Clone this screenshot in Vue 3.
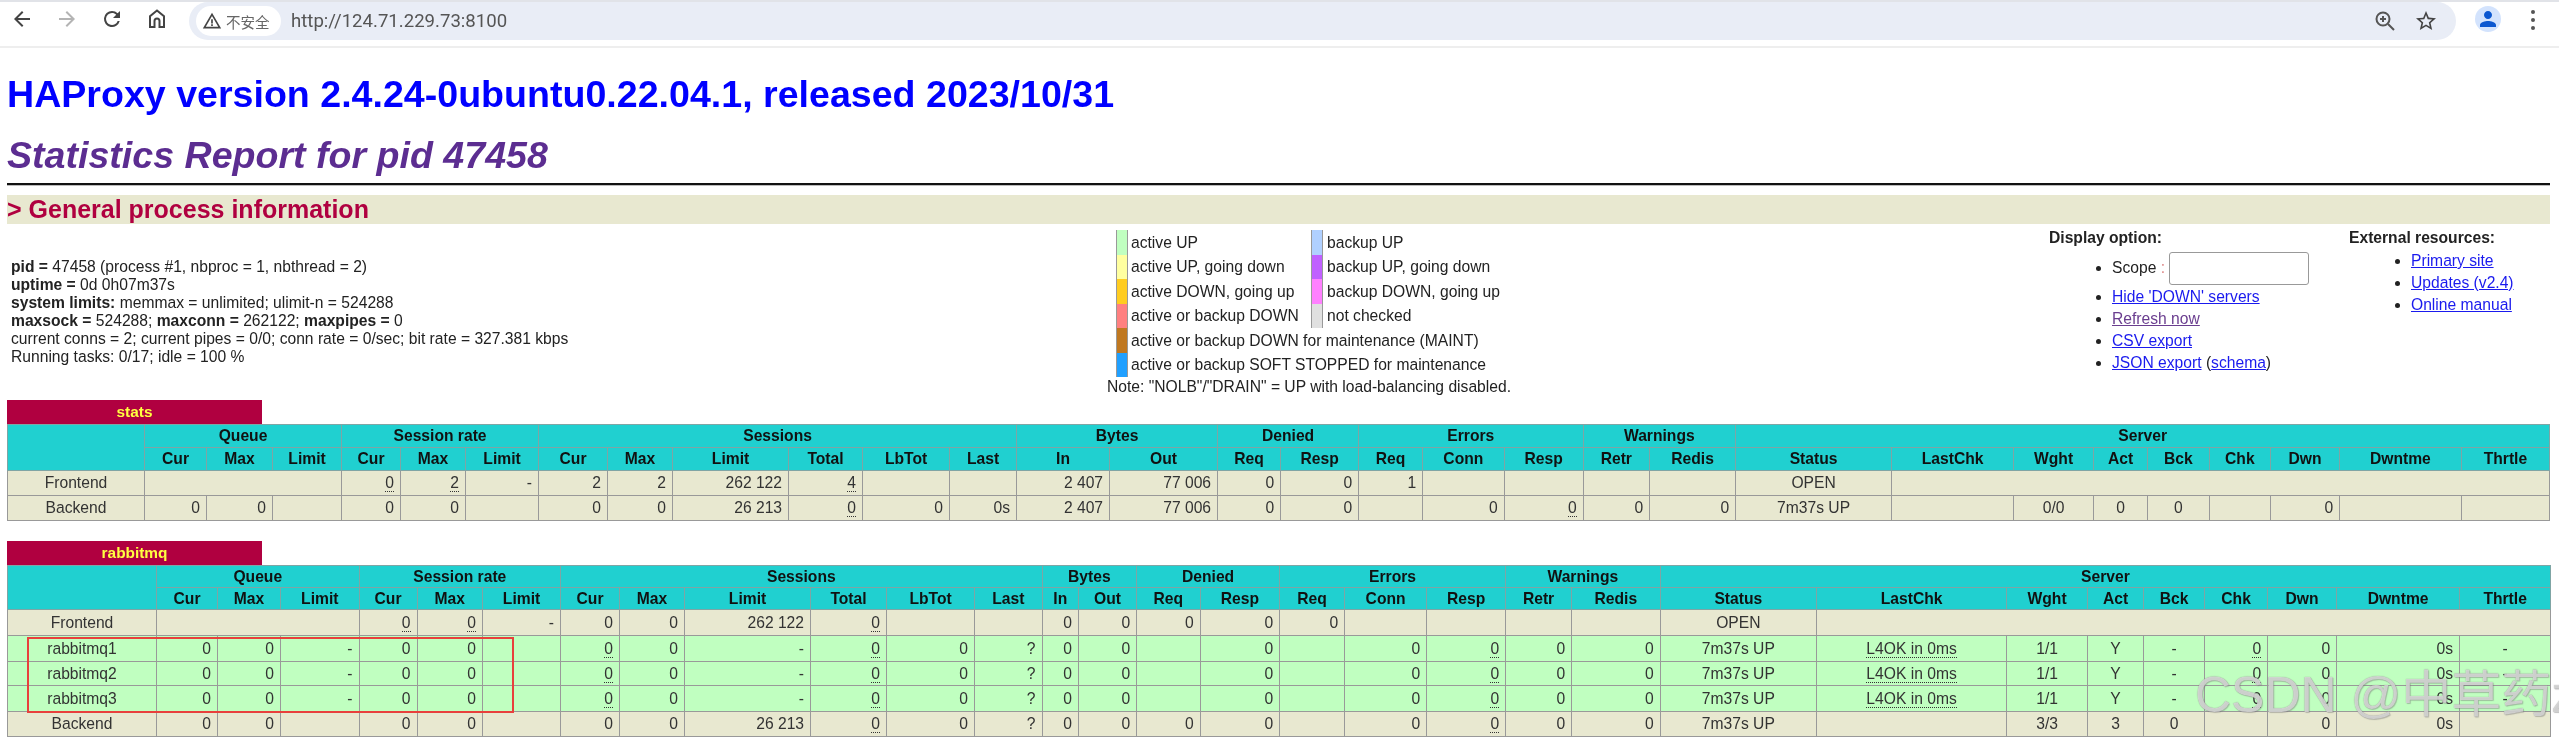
<script setup>
const edges1 = [7,144,206,272,341,400,465,538,607,672,788,862,949,1016,1109,1217,1280,1358,1422,1503.5,1582.5,1649,1735,1891,2013,2093,2147,2208.5,2270,2339,2460.6,2549]
const edges2 = [7,156,217,280,358.5,416.5,482,560,619,684,810,886,974,1041.5,1078,1136,1199.5,1279,1344,1426,1505,1571,1659.5,1816,2006,2087,2143,2204,2267,2336,2459,2550]
const widths = e => e.slice(1).map((x, i) => x - e[i])

const groups = [['Queue',3],['Session rate',3],['Sessions',6],['Bytes',2],['Denied',2],['Errors',3],['Warnings',2],['Server',9]]
const heads = ['Cur','Max','Limit','Cur','Max','Limit','Cur','Max','Limit','Total','LbTot','Last','In','Out','Req','Resp','Req','Conn','Resp','Retr','Redis','Status','LastChk','Wght','Act','Bck','Chk','Dwn','Dwntme','Thrtle']
const centred = new Set([0,22,23,24,25,26,30])

const cell = (v, col, span = 1) => {
  const under = v.startsWith('_')
  const dotted = v.startsWith('~')
  return { text: under || dotted ? v.slice(1) : v, under, dotted, span, center: centred.has(col) }
}
// "3:" makes an empty cell spanning three columns
const build = list => {
  const out = []
  let col = 0
  for (const item of list) {
    const m = /^(\d+):$/.exec(item)
    const span = m ? Number(m[1]) : 1
    out.push(cell(m ? '' : item, col, span))
    col += span
  }
  return out
}
const srv = n => ({ kind: 'up', h: n === 2 ? 24 : 26, cells: build([`rabbitmq${n}`,'0','0','-','0','0','','_0','0','-','_0','0','?','0','0','','0','','0','_0','0','0','7m37s UP','~L4OK in 0ms','1/1','Y','-','_0','0','0s','-']) })

const proxies = [
  {
    name: 'stats', tabWidth: 255, cols: widths(edges1), headH: [23, 23],
    rows: [
      { kind: 'fe', h: 25, cells: build(['Frontend','3:','_0','_2','-','2','2','262 122','_4','','','2 407','77 006','0','0','1','','','','','OPEN','8:']) },
      { kind: 'fe', h: 25, cells: build(['Backend','0','0','','0','0','','0','0','26 213','_0','0','0s','2 407','77 006','0','0','','0','_0','0','0','7m37s UP','','0/0','0','0','','0','','']) }
    ]
  },
  {
    name: 'rabbitmq', tabWidth: 255, cols: widths(edges2), headH: [22, 22], marked: true,
    rows: [
      { kind: 'fe', h: 26, cells: build(['Frontend','3:','_0','_0','-','0','0','262 122','_0','','','0','0','0','0','0','','','','','OPEN','8:']) },
      srv(1), srv(2), srv(3),
      { kind: 'fe', h: 25, cells: build(['Backend','0','0','','0','0','','0','0','26 213','_0','0','?','0','0','0','0','','0','_0','0','0','7m37s UP','','3/3','3','0','','0','0s','']) }
    ]
  }
]

const legend1 = [['#c0ffc0','active UP'],['#ffffa0','active UP, going down'],['#ffcc20','active DOWN, going up'],['#ff8080','active or backup DOWN'],['#c07820','active or backup DOWN for maintenance (MAINT)'],['#20a0ff','active or backup SOFT STOPPED for maintenance']]
const legend2 = [['#b0d0ff','backup UP'],['#c060ff','backup UP, going down'],['#ff80ff','backup DOWN, going up'],['#e0e0e0','not checked']]
</script>

<template>
  <div class="root">
    <header class="chrome">
      <div class="navs">
        <svg class="ico" viewBox="0 0 24 24"><path fill="#444" d="M20 11H7.83l5.59-5.59L12 4l-8 8 8 8 1.41-1.41L7.83 13H20z"/></svg>
        <svg class="ico" viewBox="0 0 24 24"><path fill="#b4b4b4" d="M4 11h12.17l-5.59-5.59L12 4l8 8-8 8-1.41-1.41L16.17 13H4z"/></svg>
        <svg class="ico" viewBox="0 0 24 24"><path fill="#444" d="M17.65 6.35A7.95 7.95 0 0 0 12 4a8 8 0 1 0 7.73 10h-2.08A6 6 0 1 1 12 6c1.66 0 3.14.69 4.22 1.78L13 11h7V4z"/></svg>
        <svg class="ico" viewBox="0 0 24 24"><path fill="none" stroke="#444" stroke-width="2" d="M12 3.5 5 9.2V20h4.5v-6a2.5 2.5 0 0 1 5 0v6H19V9.2z"/></svg>
      </div>
      <div class="omni">
        <div class="chip">
          <svg class="warn" viewBox="0 0 24 24"><path fill="#444" d="M1 21h22L12 2 1 21zm3.5-2L12 6l7.5 13zM11 16h2v2h-2zm0-6h2v5h-2z"/></svg>
          <span class="chip-t">不安全</span>
        </div>
        <span class="url">http://124.71.229.73:8100</span>
        <div class="omni-r">
          <svg class="ico" viewBox="0 0 24 24"><circle cx="10" cy="10" r="6.5" fill="none" stroke="#555" stroke-width="2"/><path stroke="#555" stroke-width="2" d="m15 15 6 6M10 7v6M7 10h6"/></svg>
          <svg class="ico" viewBox="0 0 24 24"><path fill="#444" d="M22 9.24l-7.19-.62L12 2 9.19 8.63 2 9.24l5.46 4.73L5.82 21 12 17.27 18.18 21l-1.63-7.03L22 9.24zM12 15.4l-3.76 2.27 1-4.28-3.32-2.88 4.38-.38L12 6.1l1.71 4.04 4.38.38-3.32 2.88 1 4.28L12 15.4z"/></svg>
        </div>
      </div>
      <div class="avatar">
        <svg viewBox="0 0 24 24" width="24" height="24"><path fill="#0b57d0" d="M12 12c2.21 0 4-1.79 4-4s-1.79-4-4-4-4 1.79-4 4 1.79 4 4 4zm0 2c-2.67 0-8 1.34-8 4v2h16v-2c0-2.66-5.33-4-8-4z"/></svg>
      </div>
      <div class="dots"><i></i><i></i><i></i></div>
    </header>

    <main class="page">
      <h1 class="ver">HAProxy version 2.4.24-0ubuntu0.22.04.1, released 2023/10/31</h1>
      <h2 class="rep">Statistics Report for pid 47458</h2>
      <div class="rule"></div>
      <h3 class="band">&gt; General process information</h3>

      <section class="info">
        <div class="proc">
          <b>pid = </b>47458 (process #1, nbproc = 1, nbthread = 2)<br>
          <b>uptime = </b>0d 0h07m37s<br>
          <b>system limits:</b> memmax = unlimited; ulimit-n = 524288<br>
          <b>maxsock = </b>524288; <b>maxconn = </b>262122; <b>maxpipes = </b>0<br>
          current conns = 2; current pipes = 0/0; conn rate = 0/sec; bit rate = 327.381 kbps<br>
          Running tasks: 0/17; idle = 100 %
        </div>
        <div class="legend">
          <div class="lg-cols">
            <div class="lg-col">
              <div v-for="l in legend1" :key="l[1]" class="lg-row"><span class="sw" :style="{ background: l[0] }"></span>{{ l[1] }}</div>
            </div>
            <div class="lg-col lg-col2">
              <div v-for="l in legend2" :key="l[1]" class="lg-row"><span class="sw" :style="{ background: l[0] }"></span>{{ l[1] }}</div>
            </div>
          </div>
          <div class="note">Note: "NOLB"/"DRAIN" = UP with load-balancing disabled.</div>
        </div>
        <div class="opts">
          <b>Display option:</b>
          <ul>
            <li class="scope">Scope <span class="colon">:</span> <input class="scope-in" type="text"></li>
            <li><a href="#">Hide 'DOWN' servers</a></li>
            <li><a href="#" class="seen">Refresh now</a></li>
            <li><a href="#">CSV export</a></li>
            <li><a href="#">JSON export</a> (<a href="#">schema</a>)</li>
          </ul>
        </div>
        <div class="opts ext">
          <b>External resources:</b>
          <ul>
            <li><a href="#">Primary site</a></li>
            <li><a href="#">Updates (v2.4)</a></li>
            <li><a href="#">Online manual</a></li>
          </ul>
        </div>
      </section>

      <section v-for="p in proxies" :key="p.name" class="proxy">
        <div class="tab" :style="{ width: p.tabWidth + 'px' }">{{ p.name }}</div>
        <table class="tbl">
          <colgroup><col v-for="(w, i) in p.cols" :key="i" :style="{ width: w + 'px' }"></colgroup>
          <thead>
            <tr :style="{ height: p.headH[0] + 'px' }">
              <th rowspan="2"></th>
              <th v-for="g in groups" :key="g[0]" :colspan="g[1]">{{ g[0] }}</th>
            </tr>
            <tr :style="{ height: p.headH[1] + 'px' }">
              <th v-for="(h, i) in heads" :key="i">{{ h }}</th>
            </tr>
          </thead>
          <tbody>
            <tr v-for="(r, ri) in p.rows" :key="ri" :class="r.kind" :style="{ height: r.h + 'px' }">
              <td v-for="(c, ci) in r.cells" :key="ci" :colspan="c.span" :class="{ ctr: c.center }">
                <span v-if="c.under || c.dotted" class="dot">{{ c.text }}</span>
                <template v-else>{{ c.text }}</template>
              </td>
            </tr>
          </tbody>
        </table>
        <div v-if="p.marked" class="mark"></div>
      </section>
    </main>

    <div class="wm">CSDN @中草药z</div>
  </div>
</template>

<style scoped>
.root {
  position: relative;
  width: 2559px;
  height: 741px;
  overflow: hidden;
  background: #fff;
  color: #222;
  font-family: "Liberation Sans", Arial, sans-serif;
  font-size: 15.65px;
  filter: blur(0.45px);
}
.chrome {
  height: 48px;
  box-sizing: border-box;
  border-top: 2px solid #e1e3e8;
  border-bottom: 2px solid #eeeeee;
  display: flex;
  align-items: flex-start;
  background: #fff;
}
.navs { display: flex; gap: 21px; padding: 5px 0 0 10px; }
.ico { width: 24px; height: 24px; display: block; flex: none; }
.omni {
  margin-left: 20px;
  width: 2267px;
  height: 38px;
  border-radius: 19px;
  background: #e9edf6;
  display: flex;
  align-items: center;
}
.chip {
  margin-left: 7px;
  width: 85px;
  height: 30px;
  border-radius: 15px;
  background: #fff;
  display: flex;
  align-items: center;
  box-sizing: border-box;
  padding-left: 6px;
  gap: 4px;
}
.warn { width: 20px; height: 20px; }
.chip-t { font: 14.5px "Noto Sans CJK SC", sans-serif; color: #666; }
.url { margin-left: 10px; font: 18.6px Roboto, sans-serif; color: #555; }
.omni-r { margin-left: auto; margin-right: 18px; display: flex; gap: 17px; }
.avatar {
  margin-left: 19px;
  margin-top: 4px;
  width: 26px;
  height: 26px;
  border-radius: 50%;
  background: #d3e3fd;
  display: flex;
  align-items: center;
  justify-content: center;
}
.dots { margin-left: 30px; margin-top: 8px; display: flex; flex-direction: column; gap: 4px; }
.dots i { width: 4px; height: 4px; border-radius: 50%; background: #555; display: block; }

.page { padding: 0 9px 0 7px; }
.ver {
  margin: 0;
  padding-top: 24px;
  height: 44px;
  line-height: 44px;
  font-size: 37.6px;
  font-weight: bold;
  color: #0000ff;
  white-space: nowrap;
}
.rep {
  margin: 0;
  padding-top: 17px;
  height: 44px;
  line-height: 44px;
  font-size: 37.6px;
  font-style: italic;
  font-weight: bold;
  color: #5c2d91;
  white-space: nowrap;
}
.rule {
  margin-top: 6px;
  height: 2px;
  background: #111;
  box-shadow: 0 1px 0 #bbb;
}
.band {
  margin: 10px 0 0;
  height: 29px;
  line-height: 29px;
  background: #e8e8d0;
  color: #b00040;
  font-size: 25px;
  font-weight: bold;
  white-space: nowrap;
}
.info {
  height: 176px;
  display: grid;
  grid-template-columns: 1100px 942px 300px 1fr;
}
.proc { padding: 34px 0 0 4px; line-height: 18px; }
.legend { padding-top: 6px; line-height: 17px; }
.lg-cols { display: flex; padding-left: 9px; }
.lg-col { width: 195px; }
.lg-row { height: 24.5px; display: flex; align-items: center; white-space: nowrap; }
.sw {
  width: 10px;
  height: 24.5px;
  margin-right: 3px;
  border-left: 1px solid #999;
  border-right: 1px solid #999;
  flex: none;
}
.lg-col2 .sw { margin-right: 4px; }
.note { margin-top: 1px; white-space: nowrap; }
.opts { padding-top: 5px; line-height: 18px; }
.opts ul { margin: 0; padding: 0 0 0 63px; list-style: disc; }
.opts li { height: 22px; line-height: 22px; white-space: nowrap; }
.opts li.scope { height: 36px; margin-top: 3px; line-height: 36px; }
.colon { color: #d88; }
.scope-in {
  width: 140px;
  height: 33px;
  box-sizing: border-box;
  border: 1px solid #999;
  border-radius: 3px;
  padding: 0;
  vertical-align: middle;
  margin-left: 0;
  background: #fff;
}
.ext ul { padding-left: 62px; margin-top: 3px; }
a { color: #1a1aee; }
a.seen { color: #6a3d8f; }

.proxy { position: relative; margin-bottom: 20px; }
.tab {
  height: 24px;
  line-height: 24px;
  background: #b00040;
  color: #ffff40;
  font-weight: bold;
  text-align: center;
  font-size: 15.4px;
}
.tbl {
  table-layout: fixed;
  border-collapse: collapse;
  width: 100%;
  background: #e8e8d0;
}
th, td {
  border: 1px solid #999;
  padding: 0 6px;
  white-space: nowrap;
  font-size: 15.65px;
  line-height: 18px;
}
th { background: #20d0d0; font-weight: bold; text-align: center; color: #111; border-color: #7fa5a5; }
td { text-align: right; color: #333; }
td.ctr { text-align: center; }
tr.up td { background: #c0ffc0; }
.dot { border-bottom: 1px dotted #333; }
.mark {
  position: absolute;
  left: 20px;
  top: 96px;
  width: 483px;
  height: 72px;
  border: 2px solid #e8403c;
  pointer-events: none;
}
.wm {
  position: absolute;
  left: 2195px;
  top: 665px;
  font: 50px/60px "Liberation Sans", "Noto Sans CJK SC", sans-serif;
  white-space: nowrap;
  color: rgba(232, 232, 232, 0.75);
  text-shadow: 0 0 1px rgba(100, 100, 100, 0.7), 1px 1px 1px rgba(120, 120, 120, 0.4);
}
</style>
